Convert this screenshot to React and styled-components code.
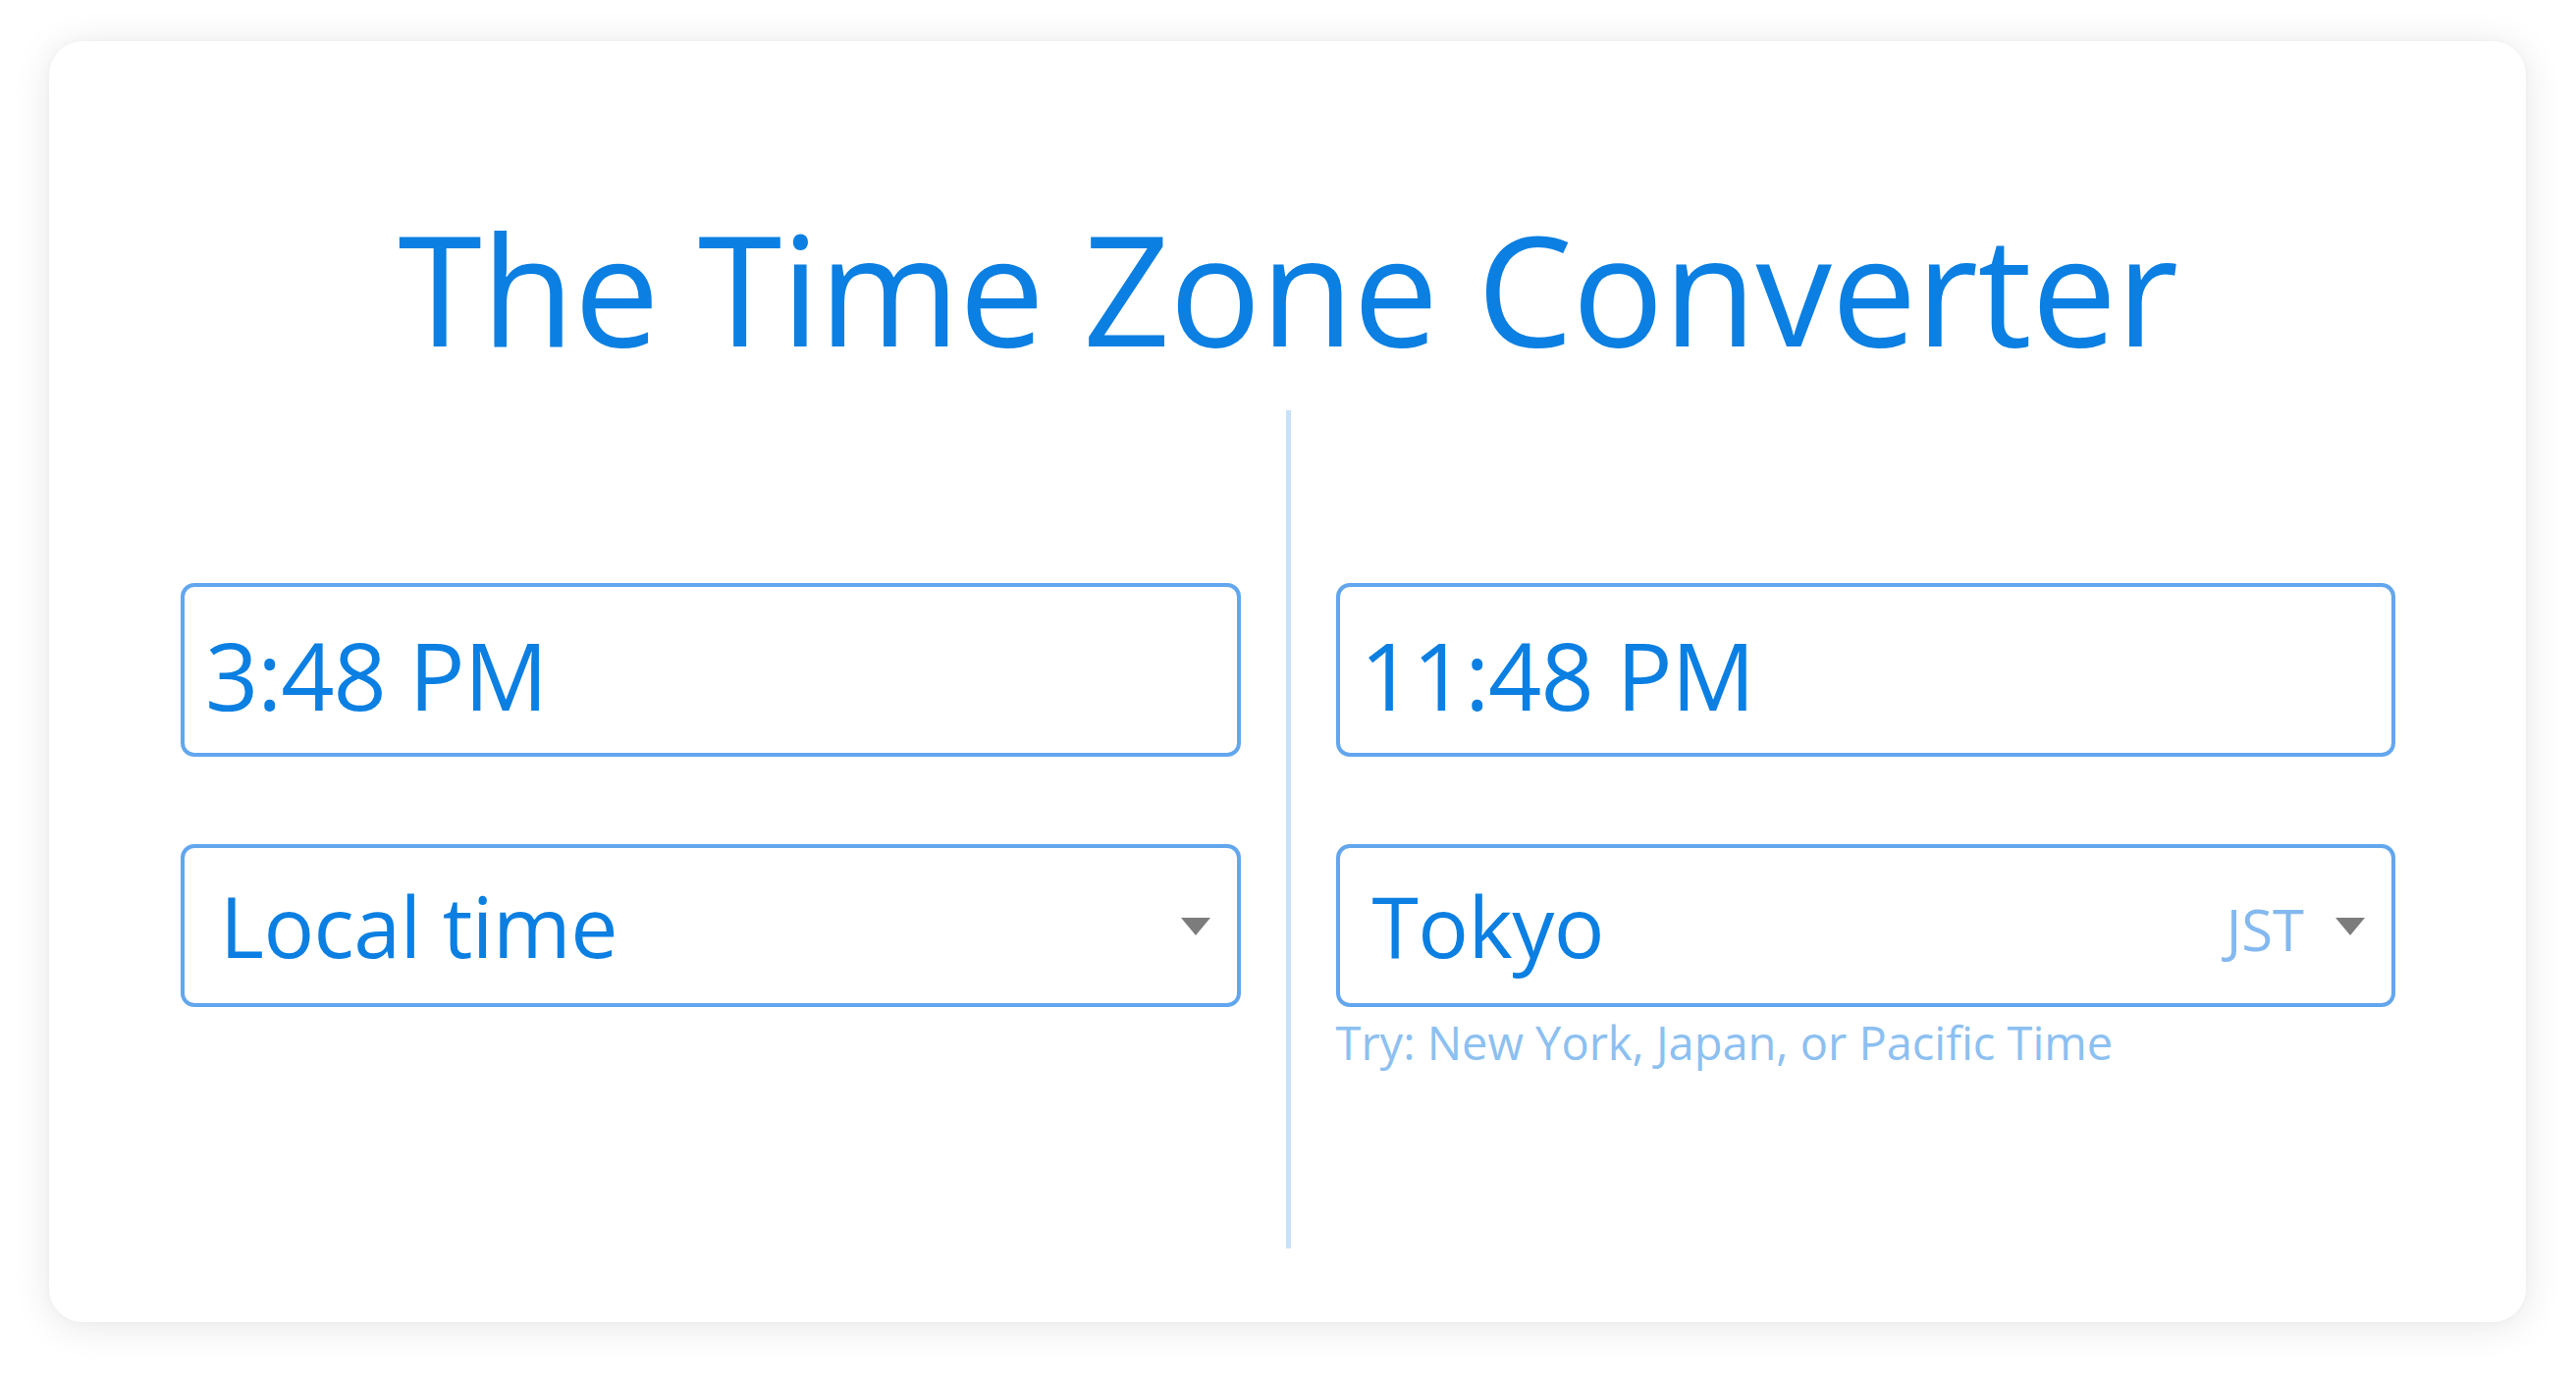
import React, { useState } from 'react';
import styled, { createGlobalStyle } from 'styled-components';

const GlobalStyle = createGlobalStyle`
  html, body {
    margin: 0;
    padding: 0;
    background: #ffffff;
    font-family: "Open Sans", "Noto Sans", sans-serif;
  }
  * { box-sizing: border-box; }
`;

const Page = styled.div`
  padding: 42px 51px 59px 50px;
`;

const Card = styled.div`
  background: #ffffff;
  border-radius: 34px;
  box-shadow: 0 4px 38px rgba(0, 0, 0, 0.1), 0 0 6px rgba(0, 0, 0, 0.03);
  padding: 173px 133px 75px 134px;
`;

const Title = styled.h1`
  margin: 0 0 48px;
  font-size: 155px;
  line-height: 155px;
  font-weight: 400;
  color: #0b7fe2;
  text-align: center;
  letter-spacing: -0.6px;
`;

const Columns = styled.div`
  display: grid;
  grid-template-columns: 1fr 5px 1fr;
  column-gap: 46px;
  height: 854px;
`;

const Divider = styled.div`
  background: #c8e1f9;
`;

const Column = styled.div`
  padding-top: 176px;
  display: flex;
  flex-direction: column;
`;

const TimeInput = styled.input`
  width: 100%;
  height: 177px;
  border: 4px solid #62a6ee;
  border-radius: 14px;
  padding: 9px 0 0 21px;
  font-family: inherit;
  font-size: 95px;
  color: #0b7fe2;
  background: #fff;
  outline: none;
  letter-spacing: -1px;
`;

const ZoneBox = styled.div`
  margin-top: 89px;
  height: 166px;
  border: 4px solid #62a6ee;
  border-radius: 14px;
  padding: 0 27px 0 ${(p) => p.$inset}px;
  display: flex;
  align-items: center;
  cursor: pointer;
`;

const ZoneName = styled.span`
  flex: 1;
  font-size: 86px;
  line-height: 1;
  color: #0b7fe2;
  letter-spacing: -0.5px;
`;

const Abbr = styled.span`
  font-size: 58px;
  color: #84b9ef;
  margin-right: 32px;
  margin-top: 6px;
`;

const Caret = styled.span`
  width: 0;
  height: 0;
  border-left: 15px solid transparent;
  border-right: 15px solid transparent;
  border-top: 18px solid #7c7c7c;
  margin-top: 2px;
`;

const Hint = styled.div`
  margin-top: 4px;
  font-size: 47px;
  color: #8cc0f1;
`;

const App = () => {
  const [local, setLocal] = useState('3:48 PM');
  const [remote, setRemote] = useState('11:48 PM');

  return (
    <>
      <GlobalStyle />
      <Page>
        <Card>
          <Title>The Time Zone Converter</Title>
          <Columns>
            <Column>
              <TimeInput value={local} onChange={(e) => setLocal(e.target.value)} />
              <ZoneBox $inset={36}>
                <ZoneName>Local time</ZoneName>
                <Caret />
              </ZoneBox>
            </Column>
            <Divider />
            <Column>
              <TimeInput value={remote} onChange={(e) => setRemote(e.target.value)} />
              <ZoneBox $inset={33}>
                <ZoneName>Tokyo</ZoneName>
                <Abbr>JST</Abbr>
                <Caret />
              </ZoneBox>
              <Hint>Try: New York, Japan, or Pacific Time</Hint>
            </Column>
          </Columns>
        </Card>
      </Page>
    </>
  );
};

export default App;
